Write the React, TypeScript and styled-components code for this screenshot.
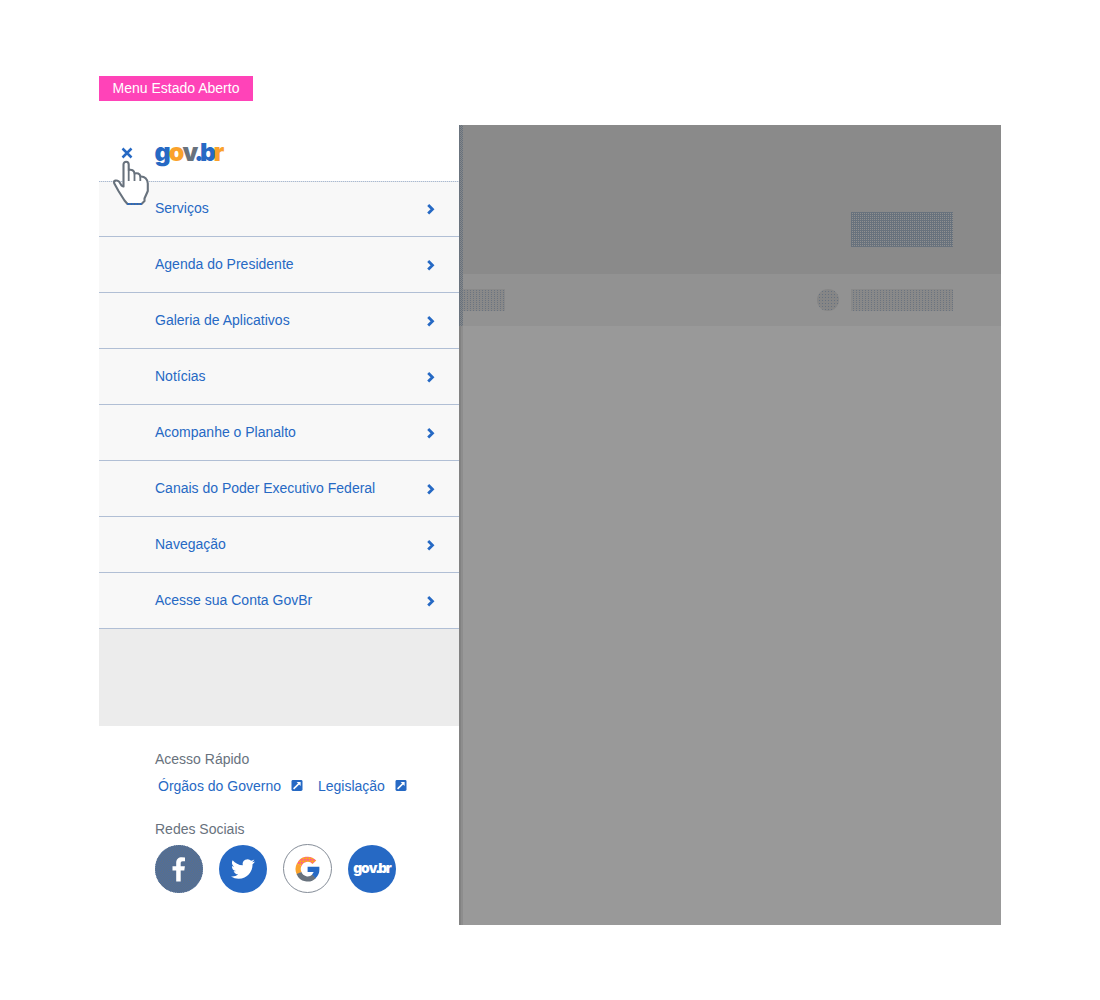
import React from 'react';
import styled, { createGlobalStyle, css } from 'styled-components';

const blue = '#2669c4';
const slate = '#68727d';
const amber = '#faa22b';

const GlobalStyle = createGlobalStyle`
  * { box-sizing: border-box; }
  body {
    margin: 0;
    background: #fff;
    font-family: "Liberation Sans", Arial, Helvetica, sans-serif;
    font-size: 14px;
  }
`;

/* Single-pixel dots laid over the element, $x by $y pixels apart. */
const dots = (color: string, x: number, y: number) => css`
  overflow: hidden;
  &::before {
    content: '';
    display: block;
    width: 100%;
    height: 100%;
    background: repeating-linear-gradient(90deg, transparent 0 ${x - 1}px, ${color} ${x - 1}px ${x}px);
    mask-image: repeating-linear-gradient(180deg, transparent 0 ${y - 1}px, #000 ${y - 1}px ${y}px);
  }
`;

/* One-pixel chequer of the given colour. */
const chequer = (color: string) => css`
  background: ${color};
  mask-image:
    repeating-linear-gradient(90deg, #000 0 1px, transparent 1px 2px),
    repeating-linear-gradient(180deg, #000 0 1px, transparent 1px 2px);
  mask-composite: exclude;
`;

const Page = styled.main`
  width: 1100px;
  height: 1000px;
  padding: 76px 99px 0;
  background: #fff;
`;

const StateLabel = styled.div`
  width: 154px;
  height: 25px;
  line-height: 25px;
  text-align: center;
  background: #ff43b8;
  color: #fff;
`;

const Frame = styled.div`
  display: flex;
  width: 902px;
  height: 800px;
  margin-top: 24px;
`;

const Drawer = styled.aside`
  display: flex;
  flex-direction: column;
  width: 360px;
  background: #fff;
`;

const DrawerHeader = styled.header`
  position: relative;
  display: flex;
  align-items: center;
  height: 56px;
  padding-left: 22px;
`;

const CloseButton = styled.button`
  display: flex;
  width: 12px;
  height: 12px;
  padding: 0;
  border: 0;
  background: none;
`;

const Pointer = styled.svg`
  position: absolute;
  left: 13px;
  top: 35px;
  z-index: 1;
`;

const Logo = styled.span<{ $size: number }>`
  display: inline-flex;
  font-family: Inter, sans-serif;
  font-weight: 900;
  font-size: ${p => p.$size}px;
  line-height: 1;
  letter-spacing: -0.075em;
`;

const BrandSlot = styled.div`
  display: flex;
  margin: -2px 0 0 21.5px;
`;

const Letter = styled.span<{ $color?: string }>`
  color: ${p => p.$color ?? 'inherit'};
`;

const TightLetters = styled(Letter)<{ $trail: number }>`
  letter-spacing: -0.15em;
  margin-right: ${p => p.$trail}em;
`;

const Menu = styled.nav`
  display: flex;
  flex-direction: column;
  background:
    repeating-linear-gradient(90deg, #a9bad3 0 1px, #dfe2e6 1px 2px) top / 100% 1px no-repeat,
    #f8f8f8;
`;

const MenuItem = styled.a`
  display: flex;
  align-items: center;
  justify-content: space-between;
  height: 56px;
  padding: 0 23px 0 56px;
  border-bottom: 1px solid #b1bfd5;
  color: ${blue};
`;

const MenuText = styled.span`
  padding-bottom: 2px;
`;

const Spacer = styled.div`
  height: 97px;
  background: #ececec;
`;

const Footer = styled.footer`
  display: flex;
  flex-direction: column;
  padding: 24px 0 0 56px;
`;

const Heading = styled.h2`
  margin: 0;
  font-size: 14px;
  font-weight: 400;
  line-height: 18px;
  color: ${slate};
`;

const QuickLinks = styled.div`
  display: flex;
  gap: 15px;
  margin: 9px 0 25px 3px;
`;

const QuickLink = styled.a`
  display: flex;
  gap: 10px;
  height: 18px;
  line-height: 18px;
  color: ${blue};
`;

const LinkIcon = styled.svg`
  margin-top: 3px;
`;

const SocialRow = styled.div`
  display: flex;
  align-items: flex-start;
  gap: 16px;
  margin-top: 7px;
`;

const Social = styled.a<{ $kind: 'dither' | 'solid' | 'outline' }>`
  position: relative;
  display: flex;
  align-items: center;
  justify-content: center;
  width: 48px;
  height: 48px;
  border-radius: 50%;
  overflow: hidden;
  color: #fff;
  background: ${blue};
  ${p => p.$kind === 'outline' && css`
    width: 49px;
    height: 49px;
    margin-top: -1px;
    border: 1px solid #858d98;
    background: #fff;
  `}
  ${p => p.$kind === 'dither' && css`
    background: #4a6ea0;
    &::before {
      content: '';
      position: absolute;
      inset: 0;
      ${chequer('#606f83')}
    }
  `}
`;

const FacebookMark = styled.svg`
  position: relative;
`;

const Backdrop = styled.section`
  position: relative;
  display: flex;
  flex-direction: column;
  flex: 1;
  background: #999;
`;

const EdgeShadow = styled.div`
  position: absolute;
  left: 0;
  top: 0;
  width: 4px;
  height: 100%;
  background: linear-gradient(90deg, #828282 0 2px, #8d8d8d 2px 4px);
`;

const EdgeTint = styled.div`
  height: 201px;
  border-left: 1px solid #6b747e;
  background: #858789;
  &::before {
    content: '';
    display: block;
    height: 100%;
    ${chequer(slate)}
  }
`;

const Hero = styled.div`
  display: flex;
  justify-content: flex-end;
  height: 149px;
  padding: 87px 48px 0 0;
  background: #8a8a8a;
`;

const HeroButton = styled.div`
  width: 102px;
  height: 35px;
  background: ${slate};
  ${dots('#909090', 2, 2)}
`;

const Strip = styled.div`
  display: flex;
  align-items: center;
  height: 52px;
  padding-right: 48px;
  background: #929292;
`;

const Block = styled.div<{ $width: number }>`
  width: ${p => p.$width}px;
  height: 22px;
  background: #898989;
  ${dots('#6b7480', 3, 2)}
`;

const Dot = styled.div`
  width: 22px;
  height: 22px;
  margin: 0 12px 0 auto;
  border-radius: 50%;
  background: #868686;
  ${dots('#66717f', 3, 3)}
`;

const items = [
  'Serviços',
  'Agenda do Presidente',
  'Galeria de Aplicativos',
  'Notícias',
  'Acompanhe o Planalto',
  'Canais do Poder Executivo Federal',
  'Navegação',
  'Acesse sua Conta GovBr',
];

const Brand = ({ size, colors = [] }: { size: number; colors?: string[] }) => (
  <Logo $size={size}>
    <Letter $color={colors[0]}>g</Letter>
    <Letter $color={colors[1]}>o</Letter>
    <TightLetters $color={colors[2]} $trail={-0.01}>v</TightLetters>
    <TightLetters $color={colors[3]} $trail={0.05}>.b</TightLetters>
    <Letter $color={colors[4]}>r</Letter>
  </Logo>
);

const Chevron = () => (
  <svg width="10" height="12" viewBox="0 0 10 12">
    <path d="M2.2 1.9 6.5 6.2 2.2 10.5" fill="none" stroke={blue} strokeWidth="2.8" />
  </svg>
);

const ExternalIcon = () => (
  <LinkIcon width="12" height="12" viewBox="0 0 12 12">
    <rect x=".5" y="0" width="11" height="11" rx="1.4" fill={blue} />
    <path d="M5.6 2H9.6V6Z" fill="#fff" />
    <path d="M2.6 8.9 8.2 3.4" stroke="#fff" strokeWidth="1.5" />
  </LinkIcon>
);

const Hand = () => (
  <Pointer width="39" height="47" viewBox="0 0 39 47">
    <path
      d="M11.5 26.5V4.6C11.5 .8 16.7 .8 16.7 4.6V10C19.5 9.2 22.3 10.2 22.5 13.5C25 12.7 28.1 13.5 28.3 16.5C32.5 15.9 35.8 19.5 35.8 23.5V31L32.5 38.5V41L29.5 44H15.5L12.5 40.5L6.5 31 2.2 23.2C1.4 20.3 4.5 19.8 7 21.5L9.5 25.5Z"
      fill="#fff" stroke={slate} strokeWidth="2.1" strokeLinejoin="round"
    />
    <path d="M16.7 10V21M22.5 13.5V21M28.3 16.5V21" stroke={slate} strokeWidth="1.8" />
    <path d="M15.5 44H29.5" stroke={blue} strokeWidth="2" strokeDasharray="2 1" />
  </Pointer>
);

const GoogleIcon = () => (
  <svg width="26" height="26" viewBox="0 0 26 26">
    <defs>
      <pattern id="warm" width="3" height="3" patternUnits="userSpaceOnUse">
        <rect width="3" height="3" fill="#fa9f2e" />
        <rect width="1.6" height="1.6" fill="#ff4aa8" />
      </pattern>
    </defs>
    <g fill="none" strokeWidth="5.2">
      <path d="M4.2 8.7A9.2 9.2 0 0 0 4.2 17.3" stroke={amber} />
      <path d="M19.4 6.2A9.2 9.2 0 0 0 4.2 8.9" stroke="url(#warm)" />
      <path d="M4 17A9.2 9.2 0 0 0 19.2 20.2" stroke={slate} />
      <path d="M18.8 20.4A9.2 9.2 0 0 0 21.8 13.4H12.6" stroke={blue} />
    </g>
  </svg>
);

export default function App() {
  return (
    <>
      <GlobalStyle />
      <Page>
        <StateLabel>Menu Estado Aberto</StateLabel>
        <Frame>
          <Drawer>
            <DrawerHeader>
              <CloseButton aria-label="Fechar">
                <svg width="12" height="12" viewBox="0 0 12 12">
                  <path d="M1.5 1.5 10.5 10.5M10.5 1.5 1.5 10.5" stroke={blue} strokeWidth="2.5" />
                </svg>
              </CloseButton>
              <BrandSlot>
                <Brand size={25} colors={[blue, amber, slate, blue, amber]} />
              </BrandSlot>
              <Hand />
            </DrawerHeader>
            <Menu>
              {items.map(label => (
                <MenuItem key={label}>
                  <MenuText>{label}</MenuText>
                  <Chevron />
                </MenuItem>
              ))}
            </Menu>
            <Spacer />
            <Footer>
              <Heading>Acesso Rápido</Heading>
              <QuickLinks>
                <QuickLink>Órgãos do Governo<ExternalIcon /></QuickLink>
                <QuickLink>Legislação<ExternalIcon /></QuickLink>
              </QuickLinks>
              <Heading>Redes Sociais</Heading>
              <SocialRow>
                <Social $kind="dither">
                  <FacebookMark width="14" height="25" viewBox="0 0 14 25">
                    <path d="M4.2 24.5V13.5H.5V9.2H4.2V5.9C4.2 2.2 6.5.2 9.8.2L13 .4V4.2H10.8C9.1 4.2 8.7 5 8.7 6.3V9.2H12.9L12.3 13.5H8.7V24.5Z" fill="#fff" />
                  </FacebookMark>
                </Social>
                <Social $kind="solid">
                  <svg width="24" height="24" viewBox="0 0 24 24">
                    <path fill="#fff" d="M23.95 4.57a10 10 0 0 1-2.82.77 4.96 4.96 0 0 0 2.16-2.72c-.95.55-2 .96-3.13 1.18a4.92 4.92 0 0 0-8.38 4.48C7.69 8.1 4.07 6.13 1.64 3.16a4.82 4.82 0 0 0-.67 2.48c0 1.71.87 3.21 2.19 4.1a4.9 4.9 0 0 1-2.23-.62v.06a4.92 4.92 0 0 0 3.95 4.83 5 5 0 0 1-2.21.08 4.94 4.94 0 0 0 4.6 3.42A9.87 9.87 0 0 1 0 19.54a14 14 0 0 0 7.55 2.21c9.05 0 14-7.5 14-13.98 0-.21 0-.42-.02-.63a9.94 9.94 0 0 0 2.46-2.55z" />
                  </svg>
                </Social>
                <Social $kind="outline"><GoogleIcon /></Social>
                <Social $kind="solid"><Brand size={13.8} /></Social>
              </SocialRow>
            </Footer>
          </Drawer>
          <Backdrop>
            <Hero><HeroButton /></Hero>
            <Strip>
              <Block $width={46} />
              <Dot />
              <Block $width={102} />
            </Strip>
            <EdgeShadow><EdgeTint /></EdgeShadow>
          </Backdrop>
        </Frame>
      </Page>
    </>
  );
}
